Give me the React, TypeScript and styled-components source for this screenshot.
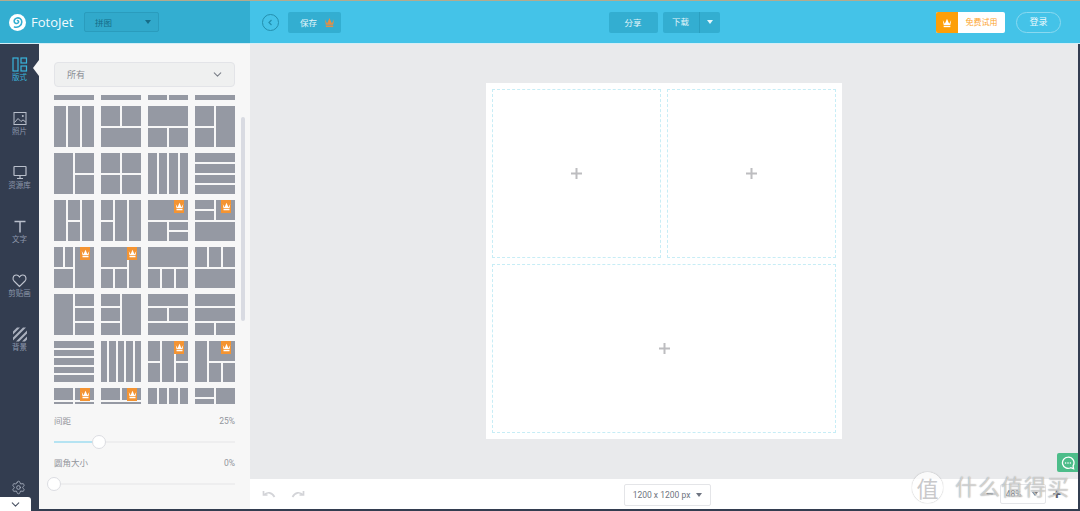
import React from 'react';
import styled, { createGlobalStyle } from 'styled-components';
import { ChevronDown, Settings } from 'lucide-react';

const GlobalStyle = createGlobalStyle`
  html, body {
    margin: 0;
    padding: 0;
    overflow: hidden;
    background: #333d50;
  }
  * {
    box-sizing: border-box;
  }
`;

const Window = styled.div`
  width: 1080px;
  height: 511px;
  display: flex;
  flex-direction: column;
  border-top: 1px solid #b3ab8e;
  font-family: Roboto, 'Noto Sans CJK SC', sans-serif;
  position: relative;
  overflow: hidden;
`;

/* ---------- header ---------- */

const Header = styled.header`
  display: flex;
  height: 43px;
  flex: none;
  border-bottom: 1px solid #d5eef6;
`;

const Brand = styled.div`
  width: 250px;
  background: #33aed1;
  display: flex;
  align-items: center;
  padding-left: 9px;
`;

const BrandName = styled.span`
  font-family: 'Open Sans', sans-serif;
  font-size: 13px;
  color: #f2fbfe;
  margin-left: 5px;
  width: 39px;
  white-space: nowrap;
`;

const TypeSelect = styled.div`
  width: 75px;
  height: 20px;
  margin-left: 14px;
  background: #31a9cb;
  border: 1px solid #2a9cbd;
  border-radius: 2px;
  display: flex;
  align-items: center;
  justify-content: space-between;
  padding: 0 7px 0 10px;
  font-size: 8.5px;
  color: #166d88;
`;

const Caret = styled.i<{ $color: string }>`
  width: 0;
  height: 0;
  border-left: 3px solid transparent;
  border-right: 3px solid transparent;
  border-top: 4px solid ${(p) => p.$color};
`;

const Toolbar = styled.div`
  flex: 1;
  background: #44c3e8;
  display: grid;
  grid-template-columns: 1fr auto 1fr;
  align-items: center;
  padding: 0 13px 0 11px;
`;

const ToolGroup = styled.div<{ $end?: boolean }>`
  display: flex;
  align-items: center;
  justify-content: ${(p) => (p.$end ? 'flex-end' : 'flex-start')};
`;

const BackButton = styled.div`
  width: 17px;
  height: 17px;
  margin: 0 9px 0 1px;
  border: 1px solid #238fae;
  border-radius: 50%;
  display: flex;
  align-items: center;
  justify-content: center;
`;

const ToolButton = styled.div<{ $width: number }>`
  width: ${(p) => p.$width}px;
  height: 21px;
  background: #33aed1;
  border-radius: 2px;
  display: flex;
  align-items: center;
  justify-content: center;
  gap: 7px;
  font-size: 8.5px;
  color: #e3f6fb;
`;

const SaveButton = styled(ToolButton)`
  padding-left: 6px;
`;

const SplitButton = styled.div`
  width: 57px;
  height: 21px;
  margin-left: 5px;
  background: #33aed1;
  border-radius: 2px;
  display: grid;
  grid-template-columns: 37px 20px;
  align-items: center;
  font-size: 8.5px;
  color: #e3f6fb;
`;

const SplitLabel = styled.span`
  text-align: center;
  line-height: 21px;
  border-right: 1px solid #2b9fc0;
`;

const SplitCaret = styled.span`
  display: flex;
  justify-content: center;
`;

const TrialButton = styled.div`
  display: flex;
  width: 69px;
  height: 21px;
  border-radius: 2px;
  overflow: hidden;
  margin-top: 1px;
  background: #fff;
  font-size: 8px;
  color: #fda32a;
`;

const TrialBadge = styled.span`
  width: 22px;
  background: #fd9f08;
  display: flex;
  align-items: center;
  justify-content: center;
`;

const TrialLabel = styled.span`
  flex: 1;
  line-height: 21px;
  text-align: center;
`;

const LoginButton = styled.div`
  width: 45px;
  height: 21px;
  margin: 0 6px 0 11px;
  border: 1px solid #8ad9f0;
  border-radius: 11px;
  text-align: center;
  line-height: 19px;
  font-size: 9px;
  color: #eefafd;
`;

/* ---------- body ---------- */

const Body = styled.div`
  flex: 1;
  min-height: 0;
  display: flex;
  padding-bottom: 2px;
`;

const Rail = styled.nav`
  width: 39px;
  background: #333d50;
  display: flex;
  flex-direction: column;
  align-items: center;
  padding-top: 13px;
  position: relative;
`;

const RailItem = styled.div<{ $active?: boolean }>`
  height: 54px;
  width: 100%;
  display: flex;
  flex-direction: column;
  align-items: center;
  font-size: 7.5px;
  line-height: 9px;
  white-space: nowrap;
  color: ${(p) => (p.$active ? '#39b4dc' : '#8d97ab')};

  svg {
    display: block;
    margin-bottom: 1px;
  }
`;

const ActiveNotch = styled.span`
  position: absolute;
  right: 0;
  top: 16px;
  width: 0;
  height: 0;
  border-top: 8px solid transparent;
  border-bottom: 8px solid transparent;
  border-right: 6px solid #f7f7f7;
`;

const RailGear = styled.div`
  position: absolute;
  left: 11px;
  bottom: 14px;
  display: flex;
  color: #a9b1c0;
`;

const CollapseTab = styled.div`
  position: absolute;
  left: 0;
  bottom: -2px;
  width: 31px;
  height: 14px;
  background: #fff;
  border-top-right-radius: 3px;
  display: flex;
  align-items: center;
  justify-content: center;
  color: #4a5364;
`;

const Panel = styled.aside`
  width: 211px;
  background: #f7f7f7;
  padding: 18px 15px 0;
  display: flex;
  flex-direction: column;
  position: relative;
`;

const CategorySelect = styled.div`
  height: 25px;
  flex: none;
  background: #eff0f0;
  border: 1px solid #e3e4e8;
  border-radius: 4px;
  display: flex;
  align-items: center;
  justify-content: space-between;
  padding: 0 10px 0 12px;
  font-size: 9px;
  color: #8a8d94;
`;

const ThumbScroller = styled.div`
  height: 309px;
  flex: none;
  margin-top: 8px;
  overflow: hidden;
`;

const ThumbGrid = styled.div`
  display: grid;
  grid-template-columns: repeat(4, 40px);
  grid-auto-rows: 41px;
  gap: 6px 7px;
  margin-top: -36px;
`;

const Thumb = styled.div<{ $tracks: number }>`
  position: relative;
  display: grid;
  grid-template-columns: repeat(${(p) => p.$tracks}, 1fr);
  grid-template-rows: repeat(${(p) => p.$tracks}, 1fr);
  gap: 2px;
`;

const ThumbCell = styled.span<{ $c: string; $r: string }>`
  grid-column: ${(p) => p.$c};
  grid-row: ${(p) => p.$r};
  background: #9599a3;
`;

const ProBadge = styled.span`
  position: absolute;
  top: 0;
  right: 4px;
  width: 10px;
  height: 13px;
  background: #f49432;
  display: flex;
  align-items: center;
  justify-content: center;
`;

const Scrollbar = styled.div`
  position: absolute;
  left: 202px;
  top: 73px;
  width: 4px;
  height: 204px;
  border-radius: 2px;
  background: #d9dbe2;
`;

const SliderRow = styled.div`
  display: flex;
  justify-content: space-between;
  font-size: 8.5px;
  line-height: 12px;
  color: #92959c;
`;

const SliderTrack = styled.div`
  position: relative;
  height: 2px;
  background: #eeeeef;
  margin: 14px 0;
`;

const SliderFill = styled.div`
  height: 100%;
  background: #b5e3f2;
`;

const SliderKnob = styled.span`
  position: absolute;
  top: -6px;
  width: 14px;
  height: 14px;
  margin-left: -7px;
  border-radius: 50%;
  background: #fff;
  border: 1px solid #dcdde2;
`;

const Sliders = styled.div`
  margin-top: 11px;
`;

const Workspace = styled.main`
  flex: 1;
  min-width: 0;
  display: flex;
  flex-direction: column;
  border-right: 2px solid #333d50;
`;

const CanvasArea = styled.div`
  flex: 1;
  background: #e9eaec;
  display: flex;
  justify-content: center;
  padding-top: 39px;
`;

const Sheet = styled.div`
  width: 356px;
  height: 356px;
  background: #fff;
  padding: 6px;
  display: grid;
  grid-template-columns: 1fr 1fr;
  grid-template-rows: 1fr 1fr;
  gap: 6px;
`;

const Slot = styled.div<{ $wide?: boolean }>`
  grid-column: ${(p) => (p.$wide ? '1 / 3' : 'auto')};
  border: 1px dashed #c7edf6;
  display: flex;
  align-items: center;
  justify-content: center;
  color: #bdbdc0;
`;

const BottomBar = styled.div`
  height: 30px;
  flex: none;
  background: #fff;
  display: flex;
  align-items: center;
  padding: 0 17px 0 12px;
  position: relative;
`;

const HistoryGroup = styled.div`
  display: flex;
  gap: 15px;
`;

const SizeSelect = styled.div`
  position: absolute;
  left: 374px;
  top: 5px;
  width: 87px;
  height: 22px;
  border: 1px solid #e4e5e8;
  border-radius: 2px;
  display: flex;
  align-items: center;
  justify-content: center;
  gap: 6px;
  font-size: 8.5px;
  color: #6e7480;
`;

const ZoomGroup = styled.div`
  margin-left: auto;
  display: flex;
  align-items: center;
  font-size: 8.5px;
  color: #7a7f8a;
`;

const ZoomValue = styled.div`
  width: 46px;
  height: 20px;
  margin: 0 7px 0 6px;
  border: 1px solid #e4e5e8;
  border-radius: 2px;
  display: flex;
  align-items: center;
  justify-content: space-between;
  padding: 0 7px 0 5px;
`;

const ZoomSign = styled.span`
  font-size: 15px;
  font-weight: 700;
  line-height: 15px;
  color: #5d6370;
`;

const ChatTab = styled.div`
  position: absolute;
  right: 2px;
  top: 452px;
  width: 21px;
  height: 19px;
  background: #4dbd8a;
  border-radius: 2px 0 0 2px;
  display: flex;
  align-items: center;
  justify-content: center;
`;

const Watermark = styled.div`
  position: absolute;
  left: 912px;
  top: 469px;
  display: flex;
  align-items: center;
  gap: 12px;
  color: rgba(255, 255, 255, 0.55);
  text-shadow: 0 0 1px rgba(90, 90, 90, 0.7);
  pointer-events: none;
  font-family: 'Noto Sans CJK SC', sans-serif;
`;

const WatermarkSeal = styled.span`
  width: 31px;
  height: 31px;
  border-radius: 50%;
  background: rgba(255, 255, 255, 0.75);
  box-shadow: 0 0 1px rgba(90, 90, 90, 0.7);
  text-align: center;
  line-height: 30px;
  font-size: 22px;
  color: #c9c9cb;
  text-shadow: none;
`;

const WatermarkText = styled.span`
  font-size: 22px;
  line-height: 30px;
  letter-spacing: 1px;
  margin-bottom: 5px;
`;

/* ---------- drawings ---------- */

const Crown = ({ size = 8, color = '#fff' }: { size?: number; color?: string }) => (
  <svg width={size} height={size} viewBox="0 0 12 12" fill={color}>
    <path d="M1 2.500 3.400 7 6 1 8.600 7 11 2.500 10 8.400H2Z" />
    <rect x="2" y="9.300" width="8" height="1.700" />
  </svg>
);

const Logo = () => (
  <svg width="17" height="17" viewBox="0 0 17 17">
    <circle cx="8.500" cy="8.500" r="8.500" fill="#fff" />
    <path
      d="M5.500 13C8.500 14 12.800 12 12.800 8c0-3-2.600-4.400-4.800-4-2.200.5-3.200 2.300-2.700 4 .5 1.600 2.700 2 3.900.8.800-.9.400-2.200-.7-2.300"
      fill="none"
      stroke="#33aed1"
      strokeWidth="1.600"
      strokeLinecap="round"
    />
  </svg>
);

const LayoutIcon = () => (
  <svg width="16" height="15" viewBox="0 0 16 15" fill="none" stroke="#39b4dc" strokeWidth="1.200">
    <rect x="1" y="1" width="5" height="13" />
    <rect x="9" y="1" width="5.500" height="5" />
    <rect x="9" y="9" width="5.500" height="5" />
  </svg>
);

const PhotoIcon = () => (
  <svg width="14" height="15" viewBox="0 0 14 14" fill="none" stroke="#b9bfcb" strokeWidth="1">
    <rect x="1" y="1" width="12" height="12" />
    <path d="M1.500 11 5 7l3 3 2-1.600 3 2.400" />
    <circle cx="9.800" cy="4.400" r="1" fill="#b9bfcb" stroke="none" />
  </svg>
);

const MonitorIcon = () => (
  <svg width="14" height="15" viewBox="0 0 14 14" fill="none" stroke="#b9bfcb" strokeWidth="1.200">
    <rect x="1" y="1" width="12" height="9" rx="0.500" />
    <path d="M7 10v3M4 13h6" />
  </svg>
);

const TextIcon = () => (
  <svg width="14" height="15" viewBox="0 0 14 14" fill="none" stroke="#b9bfcb" strokeWidth="1.500">
    <path d="M1.500 2h11M7 2v11" />
  </svg>
);

const HeartIcon = () => (
  <svg width="15" height="15" viewBox="0 0 15 14" fill="none" stroke="#c0c5d0" strokeWidth="1.100">
    <path d="M7.500 13 2 7.500C.3 5.600.9 2.700 3 1.800c1.700-.7 3.400 0 4.500 1.700C8.600 1.800 10.300 1.100 12 1.800c2.100.9 2.700 3.800 1 5.700Z" />
  </svg>
);

const StripesIcon = () => (
  <svg width="14" height="15" viewBox="0 0 14 14" fill="#aab0bd">
    <path d="M0 4 4 0h3L0 7ZM0 10 10 0h3L0 13ZM3 14 14 3v3l-8 8ZM9 14l5-5v3l-2 2Z" />
  </svg>
);

const BackIcon = () => (
  <svg width="7" height="7" viewBox="0 0 7 7" fill="none" stroke="#238fae" strokeWidth="1.200">
    <path d="M4.500 1 2 3.500 4.500 6" />
  </svg>
);

const Plus = () => (
  <svg width="11" height="11" viewBox="0 0 11 11" fill="currentColor">
    <path d="M4.500 0h2v4.500H11v2H6.500V11h-2V6.500H0v-2h4.500Z" />
  </svg>
);

const UndoIcon = ({ flip }: { flip?: boolean }) => (
  <svg
    width="14"
    height="9"
    viewBox="0 0 14 9"
    fill="none"
    stroke="#d3d4d8"
    strokeWidth="1.700"
    transform={flip ? 'scale(-1 1)' : undefined}
  >
    <path d="M1.500 1v4h4M2 5c3-3.500 8-3 10.500 2" />
  </svg>
);

const ChatIcon = () => (
  <svg width="14" height="14" viewBox="0 0 14 14" fill="none">
    <path
      d="M7 1.200a5.600 5.600 0 1 0 2.800 10.500l2.800 1.100-.5-3A5.600 5.600 0 0 0 7 1.200Z"
      stroke="#fff"
      strokeWidth="1.300"
    />
    <circle cx="4.600" cy="7" r=".8" fill="#fff" />
    <circle cx="7" cy="7" r=".8" fill="#fff" />
    <circle cx="9.400" cy="7" r=".8" fill="#fff" />
  </svg>
);

/* ---------- data ---------- */

// each cell is [column lines, row lines]; layouts sit on a 12 x 12 grid unless tracks says otherwise
type Cell = [string, string];
type Layout = { cells: Cell[]; tracks?: number; pro?: boolean };

const ALL = '1 / -1';
const A = '1 / 7';
const B = '7 / 13';
const X = '1 / 5';
const Y = '5 / 9';
const Z = '9 / 13';

const QUARTERS = ['1 / 4', '4 / 7', '7 / 10', '10 / 13'];
const FIFTHS = ['1 / 2', '2 / 3', '3 / 4', '4 / 5', '5 / 6'];

const layouts: Layout[] = [
  // the first row is scrolled up, only its lower edge is on show
  { cells: [[ALL, ALL]] },
  { cells: [[ALL, ALL]] },
  { cells: [[A, ALL], [B, ALL]] },
  { cells: [[ALL, ALL]] },

  { cells: [[X, ALL], [Y, ALL], [Z, ALL]] },
  { cells: [[A, A], [B, A], [ALL, B]] },
  { cells: [[ALL, A], [A, B], [B, B]] },
  { cells: [[A, A], [A, B], [B, ALL]] },

  { cells: [[A, ALL], [B, A], [B, B]] },
  { cells: [[A, A], [B, A], [A, B], [B, B]] },
  { cells: QUARTERS.map((c) => [c, ALL] as Cell) },
  { cells: QUARTERS.map((r) => [ALL, r] as Cell) },

  { cells: [[X, ALL], [Y, A], [Y, B], [Z, ALL]] },
  { cells: [[X, A], [X, B], [Y, ALL], [Z, ALL]] },
  { cells: [[ALL, A], [A, B], [B, '7 / 10'], [B, '10 / 13']], pro: true },
  { cells: [[A, '1 / 4'], [A, '4 / 7'], [B, A], [ALL, B]], pro: true },

  { cells: [['1 / 4', A], ['4 / 7', A], [A, B], [B, ALL]], pro: true },
  { cells: [['1 / 9', A], [X, B], [Y, B], [Z, ALL]], pro: true },
  { cells: [[ALL, A], [X, B], [Y, B], [Z, B]] },
  { cells: [[X, A], [Y, A], [Z, A], [ALL, B]] },

  { cells: [[A, ALL], [B, X], [B, Y], [B, Z]] },
  { cells: [[A, X], [A, Y], [A, Z], [B, ALL]] },
  { cells: [[ALL, X], [A, Y], [B, Y], [ALL, Z]] },
  { cells: [[ALL, X], [ALL, Y], [A, Z], [B, Z]] },

  { tracks: 5, cells: FIFTHS.map((r) => [ALL, r] as Cell) },
  { tracks: 5, cells: FIFTHS.map((c) => [c, ALL] as Cell) },
  { cells: [[X, A], [X, B], [Y, ALL], [Z, A], [Z, B]], pro: true },
  { cells: [[X, ALL], ['5 / 13', A], [Y, B], [Z, B]], pro: true },

  // the last row runs past the bottom of the scroller
  { cells: [[A, X], [B, X], [A, '5 / 13'], [B, '5 / 13']], pro: true },
  { cells: [[A, X], [B, X], [ALL, '5 / 13']], pro: true },
  { cells: QUARTERS.map((c) => [c, ALL] as Cell) },
  { cells: [[A, '1 / 4'], [A, '4 / 13'], [B, ALL]] },
];

const railItems = [
  { label: '版式', icon: <LayoutIcon />, active: true },
  { label: '照片', icon: <PhotoIcon /> },
  { label: '资源库', icon: <MonitorIcon /> },
  { label: '文字', icon: <TextIcon /> },
  { label: '剪贴画', icon: <HeartIcon /> },
  { label: '背景', icon: <StripesIcon /> },
];

const App = (): JSX.Element => (
  <Window>
    <GlobalStyle />
    <Header>
      <Brand>
        <Logo />
        <BrandName>FotoJet</BrandName>
        <TypeSelect>
          拼图
          <Caret $color="#166d88" />
        </TypeSelect>
      </Brand>
      <Toolbar>
        <ToolGroup>
          <BackButton>
            <BackIcon />
          </BackButton>
          <SaveButton $width={53}>
            保存
            <Crown size={11} color="#e58e45" />
          </SaveButton>
        </ToolGroup>
        <ToolGroup>
          <ToolButton $width={49}>分享</ToolButton>
          <SplitButton>
            <SplitLabel>下载</SplitLabel>
            <SplitCaret>
              <Caret $color="#e3f6fb" />
            </SplitCaret>
          </SplitButton>
        </ToolGroup>
        <ToolGroup $end>
          <TrialButton>
            <TrialBadge>
              <Crown size={10} />
            </TrialBadge>
            <TrialLabel>免费试用</TrialLabel>
          </TrialButton>
          <LoginButton>登录</LoginButton>
        </ToolGroup>
      </Toolbar>
    </Header>
    <Body>
      <Rail>
        {railItems.map((item) => (
          <RailItem key={item.label} $active={item.active}>
            {item.icon}
            {item.label}
          </RailItem>
        ))}
        <ActiveNotch />
        <RailGear>
          <Settings size={15} strokeWidth={1.4} />
        </RailGear>
        <CollapseTab>
          <ChevronDown size={13} />
        </CollapseTab>
      </Rail>
      <Panel>
        <CategorySelect>
          所有
          <ChevronDown size={13} color="#7c808a" />
        </CategorySelect>
        <ThumbScroller>
          <ThumbGrid>
            {layouts.map((layout, i) => (
              <Thumb key={i} $tracks={layout.tracks ?? 12}>
                {layout.cells.map(([c, r], j) => (
                  <ThumbCell key={j} $c={c} $r={r} />
                ))}
                {layout.pro && (
                  <ProBadge>
                    <Crown size={9} />
                  </ProBadge>
                )}
              </Thumb>
            ))}
          </ThumbGrid>
        </ThumbScroller>
        <Scrollbar />
        <Sliders>
          <SliderRow>
            <span>间距</span>
            <span>25%</span>
          </SliderRow>
          <SliderTrack>
            <SliderFill style={{ width: '25%' }} />
            <SliderKnob style={{ left: '25%' }} />
          </SliderTrack>
          <SliderRow>
            <span>圆角大小</span>
            <span>0%</span>
          </SliderRow>
          <SliderTrack>
            <SliderKnob style={{ left: '0%' }} />
          </SliderTrack>
        </Sliders>
      </Panel>
      <Workspace>
        <CanvasArea>
          <Sheet>
            <Slot>
              <Plus />
            </Slot>
            <Slot>
              <Plus />
            </Slot>
            <Slot $wide>
              <Plus />
            </Slot>
          </Sheet>
        </CanvasArea>
        <BottomBar>
          <HistoryGroup>
            <UndoIcon />
            <UndoIcon flip />
          </HistoryGroup>
          <SizeSelect>
            1200 x 1200 px
            <Caret $color="#6e7480" />
          </SizeSelect>
          <ZoomGroup>
            <ZoomSign>−</ZoomSign>
            <ZoomValue>
              48%
              <Caret $color="#7a7f8a" />
            </ZoomValue>
            <ZoomSign>+</ZoomSign>
          </ZoomGroup>
        </BottomBar>
      </Workspace>
    </Body>
    <ChatTab>
      <ChatIcon />
    </ChatTab>
    <Watermark>
      <WatermarkSeal>值</WatermarkSeal>
      <WatermarkText>什么值得买</WatermarkText>
    </Watermark>
  </Window>
);

export default App;
